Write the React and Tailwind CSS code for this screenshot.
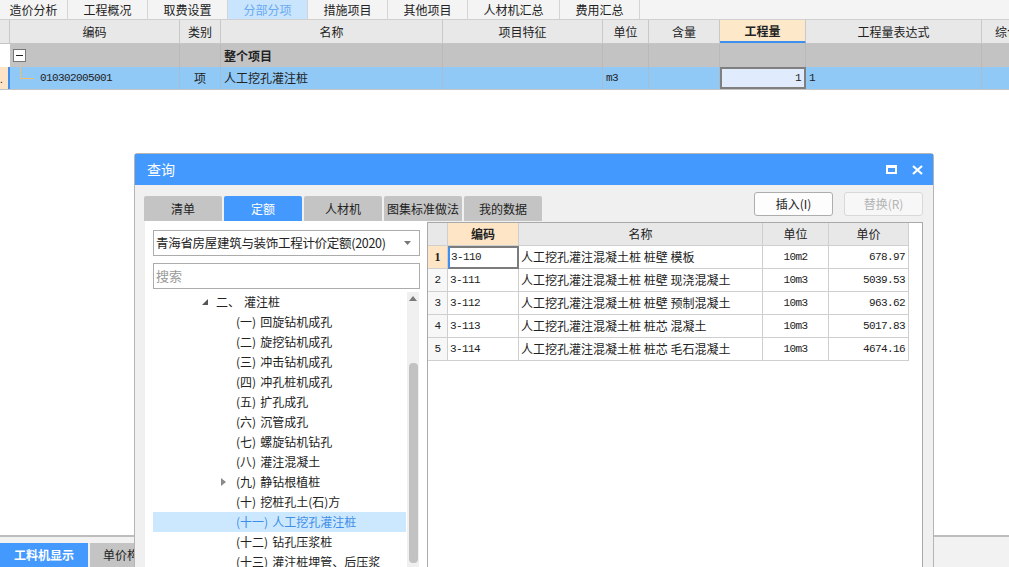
import React from 'react';

const ui = "font-['Noto_Sans_CJK_SC','Noto_Sans',sans-serif]";
const mono = "font-['Liberation_Mono','Noto_Sans_CJK_SC',monospace] text-[11px] tracking-[-0.6px]";

const topTabs = [
  { label: '造价分析', w: 'w-[68px]' },
  { label: '工程概况', w: 'w-[80px]' },
  { label: '取费设置', w: 'w-[80px]' },
  { label: '分部分项', w: 'w-[80px]', active: true },
  { label: '措施项目', w: 'w-[80px]' },
  { label: '其他项目', w: 'w-[80px]' },
  { label: '人材机汇总', w: 'w-[92px]' },
  { label: '费用汇总', w: 'w-[80px]' },
];

const gridCols = [
  { key: 'ind', label: '', w: 'w-[10px]' },
  { key: 'code', label: '编码', w: 'w-[170px]' },
  { key: 'type', label: '类别', w: 'w-[41px]' },
  { key: 'name', label: '名称', w: 'w-[222px]' },
  { key: 'feat', label: '项目特征', w: 'w-[160px]' },
  { key: 'unit', label: '单位', w: 'w-[46px]' },
  { key: 'cont', label: '含量', w: 'w-[71px]' },
  { key: 'qty', label: '工程量', w: 'w-[86px]' },
  { key: 'expr', label: '工程量表达式', w: 'w-[176px]' },
];

const treeChildren = [
  ['(一)', '回旋钻机成孔'],
  ['(二)', '旋挖钻机成孔'],
  ['(三)', '冲击钻机成孔'],
  ['(四)', '冲孔桩机成孔'],
  ['(五)', '扩孔成孔'],
  ['(六)', '沉管成孔'],
  ['(七)', '螺旋钻机钻孔'],
  ['(八)', '灌注混凝土'],
  ['(九)', '静钻根植桩', 'collapsed'],
  ['(十)', '挖桩孔土(石)方'],
  ['(十一)', '人工挖孔灌注桩', 'selected'],
  ['(十二)', '钻孔压浆桩'],
  ['(十三)', '灌注桩埋管、后压浆'],
];

const quotaRows = [
  ['1', '3-110', '人工挖孔灌注混凝土桩 桩壁 模板', '10m2', '678.97'],
  ['2', '3-111', '人工挖孔灌注混凝土桩 桩壁 现浇混凝土', '10m3', '5039.53'],
  ['3', '3-112', '人工挖孔灌注混凝土桩 桩壁 预制混凝土', '10m3', '963.62'],
  ['4', '3-113', '人工挖孔灌注混凝土桩 桩芯 混凝土', '10m3', '5017.83'],
  ['5', '3-114', '人工挖孔灌注混凝土桩 桩芯 毛石混凝土', '10m3', '4674.16'],
];

const dialogTabs = ['清单', '定额', '人材机', '图集标准做法', '我的数据'];

const App = () => {
  return (
    <div className={`relative h-[567px] w-[1009px] overflow-hidden bg-white text-[#222] ${ui}`}>
      <div className="flex h-full flex-col">
        {/* top module tabs */}
        <div className="flex h-[20px] shrink-0 border-b border-[#cfcfcf] bg-[#f4f4f4]">
          {topTabs.map(t => (
            <div
              key={t.label}
              className={`${t.w} flex items-center justify-center border-r border-[#d4d4d4] text-[12px] leading-none ${t.active ? 'bg-[#c9e4fd] text-[#6aaaf0]' : 'text-[#222]'}`}
            >
              {t.label}
            </div>
          ))}
        </div>

        {/* grid header */}
        <div className="flex h-[24px] shrink-0 border-b border-[#c4c4c4] bg-[#e8e8e8]">
          {gridCols.map(c => (
            <div
              key={c.key}
              className={`${c.w} flex shrink-0 items-center justify-center border-r border-[#c8c8c8] text-[12px] leading-none ${c.key === 'qty' ? 'border-b-2 border-b-[#3d8ff0] bg-[#fde8c9] font-bold' : ''}`}
            >
              {c.label}
            </div>
          ))}
          <div className="flex min-w-0 flex-1 items-center overflow-hidden whitespace-nowrap pl-[13px] text-[12px]">综合单价</div>
        </div>

        {/* row: whole project */}
        <div className="flex h-[23px] shrink-0 bg-[#c3c3c3]">
          <div className="w-[10px] shrink-0 bg-white" />
          <div className="flex w-[170px] shrink-0 items-center border-r border-[#b9b9b9] pl-[3px]">
            <span className="flex h-[13px] w-[13px] items-center justify-center border border-[#777] bg-white">
              <span className="h-[1px] w-[7px] bg-[#222]" />
            </span>
          </div>
          <div className="w-[41px] shrink-0 border-r border-[#b9b9b9]" />
          <div className="flex w-[222px] shrink-0 items-center border-r border-[#b9b9b9] pl-[3px] text-[12px] font-bold">整个项目</div>
          <div className="w-[160px] shrink-0 border-r border-[#b9b9b9]" />
          <div className="w-[46px] shrink-0 border-r border-[#b9b9b9]" />
          <div className="w-[71px] shrink-0 border-r border-[#b9b9b9]" />
          <div className="w-[86px] shrink-0 border-r border-[#b9b9b9]" />
          <div className="w-[176px] shrink-0 border-r border-[#b9b9b9]" />
          <div className="flex-1" />
        </div>

        {/* row: bill item */}
        <div className="flex h-[23px] shrink-0 border-b border-[#c4c4c4] bg-[#90c8f6]">
          <div className="flex w-[10px] shrink-0 items-center border-r-2 border-[#3d8ff0] bg-[#fde4c6] text-[10px]">.</div>
          <div className="flex w-[170px] shrink-0 items-center border-r border-[#a9bdd0] pl-[8px]">
            <svg className="shrink-0 self-start" width="16" height="22" viewBox="0 0 16 22">
              <path d="M2.5 0 V11.5 H16" fill="none" stroke="#f3bd6e" strokeWidth="1" />
            </svg>
            <span className={`ml-[6px] ${mono}`}>010302005001</span>
          </div>
          <div className="flex w-[41px] shrink-0 items-center justify-center border-r border-[#a9bdd0] text-[12px]">项</div>
          <div className="flex w-[222px] shrink-0 items-center border-r border-[#a9bdd0] pl-[3px] text-[12px]">人工挖孔灌注桩</div>
          <div className="w-[160px] shrink-0 border-r border-[#a9bdd0]" />
          <div className={`flex w-[46px] shrink-0 items-center border-r border-[#a9bdd0] pl-[3px] ${mono}`}>m3</div>
          <div className="w-[71px] shrink-0 border-r border-[#a9bdd0]" />
          <div className={`flex w-[86px] shrink-0 items-center justify-end border-2 border-[#7f7f7f] bg-[#e0ecfd] pr-[3px] ${mono}`}>1</div>
          <div className={`flex w-[176px] shrink-0 items-center border-r border-[#a9bdd0] pl-[3px] ${mono}`}>1</div>
          <div className="flex-1" />
        </div>

        <div className="flex-1 bg-white" />

        {/* bottom panel */}
        <div className="flex h-[32px] shrink-0 items-end gap-[2px] border-t-2 border-[#bdbdbd] bg-[#f2f2f2]">
          <div className="flex h-[24px] w-[88px] items-center justify-center bg-[#4499ff] text-[12px] font-bold text-white">工料机显示</div>
          <div className="flex h-[24px] w-[88px] items-center bg-[#c4c4c4] pl-[13px] text-[12px]">单价构成</div>
        </div>
      </div>

      {/* query dialog */}
      <div className="absolute left-[134px] top-[153px] flex h-[430px] w-[800px] flex-col rounded-t-[3px] border border-[#b5b5b5] bg-[#f0f0f0]">
        <div className="flex h-[31px] shrink-0 items-center justify-between bg-[#4499ff] pl-[12px] pr-[10px] text-white">
          <span className="text-[14px]">查询</span>
          <div className="flex items-center gap-[15px]">
            <span className="h-[9px] w-[11px] border-2 border-t-[3px] border-white" />
            <svg width="11" height="10" viewBox="0 0 11 10">
              <path d="M1 1 L10 9 M10 1 L1 9" stroke="#fff" strokeWidth="2.2" />
            </svg>
          </div>
        </div>

        <div className="flex min-h-0 flex-1 flex-col pl-[9px] pr-[10px]">
          <div className="flex h-[36px] shrink-0 items-start justify-between">
            <div className="mt-[11px] flex gap-[2px]">
              {dialogTabs.map(t => (
                <div
                  key={t}
                  className={`flex h-[25px] w-[78px] items-center justify-center rounded-t-[2px] text-[12px] ${t === '定额' ? 'bg-[#4499ff] text-white' : 'bg-[#c4c4c4] text-[#222]'}`}
                >
                  {t}
                </div>
              ))}
            </div>
            <div className="mt-[7px] flex gap-[11px]">
              <div className="flex h-[24px] w-[79px] items-center justify-center rounded-[3px] border border-[#adadad] bg-[#fdfdfd] text-[12px]">插入(I)</div>
              <div className="flex h-[24px] w-[79px] items-center justify-center rounded-[3px] border border-[#d9d9d9] bg-[#f7f7f7] text-[12px] text-[#b4b4b4]">替换(R)</div>
            </div>
          </div>

          <div className="flex min-h-0 flex-1">
            {/* left: quota library tree */}
            <div className="ml-[1px] flex w-[282px] shrink-0 flex-col bg-white pl-[8px] pt-[9px]">
              <div className="flex h-[26px] w-[267px] items-center justify-between border border-[#acacac] pl-[2px] pr-[8px] text-[12.5px] tracking-[-0.3px]">
                <span>青海省房屋建筑与装饰工程计价定额(2020)</span>
                <svg width="7" height="4" viewBox="0 0 7 4"><path d="M0 0 H7 L3.5 4 Z" fill="#777" /></svg>
              </div>
              <div className="mt-[7px] flex h-[26px] w-[267px] items-center border border-[#acacac] pl-[2px] text-[13px] text-[#9a9a9a]">搜索</div>
              <div className="mt-[3px] flex min-h-0 flex-1">
                <div className="w-[254px] text-[12px]">
                  <div className="flex h-[20px] items-center pl-[49px]">
                    <svg width="6" height="6" viewBox="0 0 6 6"><path d="M6 0 V6 H0 Z" fill="#555" /></svg>
                    <span className="ml-[8px]">二、</span>
                    <span className="ml-[4px]">灌注桩</span>
                  </div>
                  {treeChildren.map(([n, label, flag]) => (
                    <div
                      key={n}
                      className={`flex h-[20px] items-center whitespace-nowrap pl-[68px] ${flag === 'selected' ? 'mr-[1px] bg-[#cce8ff] text-[#3f8ee6]' : ''}`}
                    >
                      <span className="flex w-[15px] items-center">
                        {flag === 'collapsed' && (
                          <svg width="5" height="8" viewBox="0 0 5 8"><path d="M0 0 L5 4 L0 8 Z" fill="#8a8a8a" /></svg>
                        )}
                      </span>
                      <span>{n}</span>
                      <span className="ml-[4px]">{label}</span>
                    </div>
                  ))}
                </div>
                <div className="flex w-[12px] flex-col items-center bg-[#f0f0f0]">
                  <svg className="mt-[4px]" width="8" height="5" viewBox="0 0 8 5"><path d="M0 5 L4 0 L8 5 Z" fill="#7a7a7a" /></svg>
                  <div className="mt-[62px] h-[200px] w-[9px] rounded-[4px] bg-[#c2c2c2]" />
                </div>
              </div>
            </div>

            {/* right: quota table */}
            <div className="mt-[1px] flex w-[496px] shrink-0 flex-col border border-[#a9a9a9] bg-white">
              <div className="flex h-[23px] shrink-0 text-[12px]">
                <div className="w-[20px] shrink-0 border-b border-r border-[#cfcfcf] bg-[#e8e8e8]" />
                <div className="flex w-[71px] shrink-0 items-center justify-center border-b border-r border-[#cfcfcf] bg-[#fde5c6] font-bold">编码</div>
                <div className="flex w-[244px] shrink-0 items-center justify-center border-b border-r border-[#cfcfcf] bg-[#e8e8e8]">名称</div>
                <div className="flex w-[66px] shrink-0 items-center justify-center border-b border-r border-[#cfcfcf] bg-[#e8e8e8]">单位</div>
                <div className="flex w-[80px] shrink-0 items-center justify-center border-b border-r border-[#cfcfcf] bg-[#e8e8e8]">单价</div>
              </div>
              {quotaRows.map(([no, code, name, unit, price]) => {
                const first = no === '1';
                return (
                  <div key={no} className="flex h-[23px] shrink-0">
                    <div className={`flex w-[20px] shrink-0 items-center justify-center border-b border-r border-[#cfcfcf] ${first ? "bg-[#fde5c6] font-['Liberation_Serif',serif] text-[12px] font-bold" : `bg-[#f7f7f7] ${mono}`}`}>{no}</div>
                    <div className={`flex w-[71px] shrink-0 items-center ${mono} ${first ? 'border-2 border-[#7c7c7c] border-l-[#3d8ff0] pl-[1px]' : 'border-b border-r border-[#cfcfcf] pl-[2px]'}`}>{code}</div>
                    <div className="flex w-[244px] shrink-0 items-center whitespace-pre border-b border-r border-[#cfcfcf] pl-[2px] text-[12px]">{name}</div>
                    <div className={`flex w-[66px] shrink-0 items-center justify-center border-b border-r border-[#cfcfcf] ${mono}`}>{unit}</div>
                    <div className={`flex w-[80px] shrink-0 items-center justify-end border-b border-r border-[#cfcfcf] pr-[3px] ${mono}`}>{price}</div>
                  </div>
                );
              })}
            </div>
          </div>
        </div>
      </div>
    </div>
  );
};

export default App;
